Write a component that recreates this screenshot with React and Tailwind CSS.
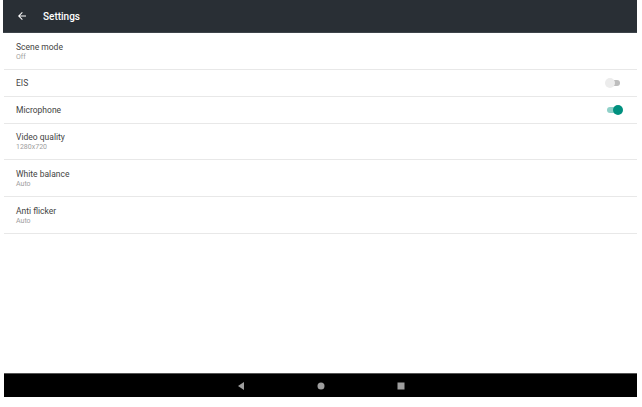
import React from "react";

function Row({ title, sub, h, children }) {
  return (
    <div className={`flex items-center justify-between border-b border-[#e8e8e8] pl-[12px] pr-[14px] ${h}`}>
      <div className="flex flex-col pt-[1px]">
        <div className="text-[8.5px] leading-[11px] text-[#444]">{title}</div>
        {sub && <div className="text-[7px] leading-[9px] text-[#a0a0a0]">{sub}</div>}
      </div>
      {children}
    </div>
  );
}

function SwitchOff() {
  return (
    <div className="relative mr-[2px] h-[10px] w-[16px]">
      <div className="absolute left-[3px] top-[2px] h-[6px] w-[12px] rounded-full bg-[#bdbdbd]" />
      <div className="absolute left-0 top-0 h-[10px] w-[10px] rounded-full bg-[#ececec]" />
    </div>
  );
}

function SwitchOn() {
  return (
    <div className="relative h-[10px] w-[16px]">
      <div className="absolute left-0 top-[2px] h-[6px] w-[13px] rounded-full bg-[#8fd0c8]" />
      <div className="absolute left-[6px] top-0 h-[10px] w-[10px] rounded-full bg-[#00907f]" />
    </div>
  );
}

export default function App() {
  return (
    <div className="h-[407px] w-[642px] bg-white" style={{ fontFamily: "Roboto, 'Noto Sans', sans-serif" }}>
      <div className="ml-[3px] flex h-[397px] w-[634px] flex-col">
        <div className="flex h-[33px] items-center border-b border-[#3d444a] bg-[#292f35] pl-[13px]">
          <svg width="12" height="12" viewBox="0 0 24 24" className="text-white">
            <path d="M20 11H7.83l5.59-5.59L12 4l-8 8 8 8 1.41-1.41L7.83 13H20v-2z" fill="currentColor" />
          </svg>
          <span className="ml-[15px] text-[10px] font-medium text-white">Settings</span>
        </div>
        <div className="flex-1 pl-[1px]">
          <Row title="Scene mode" sub="Off" h="h-[37px]" />
          <Row title="EIS" h="h-[27px]">
            <SwitchOff />
          </Row>
          <Row title="Microphone" h="h-[27px]">
            <SwitchOn />
          </Row>
          <Row title="Video quality" sub="1280x720" h="h-[36px]" />
          <Row title="White balance" sub="Auto" h="h-[37px]" />
          <Row title="Anti flicker" sub="Auto" h="h-[37px]" />
        </div>
        <div className="ml-[1px] flex h-[24px] items-center justify-center gap-[72px] border-t border-[#555] bg-black">
          <svg width="8" height="8" viewBox="0 0 8 8">
            <polygon points="7,0 7,8 1,4" fill="#9e9e9e" />
          </svg>
          <svg width="8" height="8" viewBox="0 0 8 8">
            <circle cx="4" cy="4" r="3.5" fill="#9e9e9e" />
          </svg>
          <svg width="8" height="8" viewBox="0 0 8 8">
            <rect x="0.5" y="0.5" width="7" height="7" fill="#9e9e9e" />
          </svg>
        </div>
      </div>
    </div>
  );
}
